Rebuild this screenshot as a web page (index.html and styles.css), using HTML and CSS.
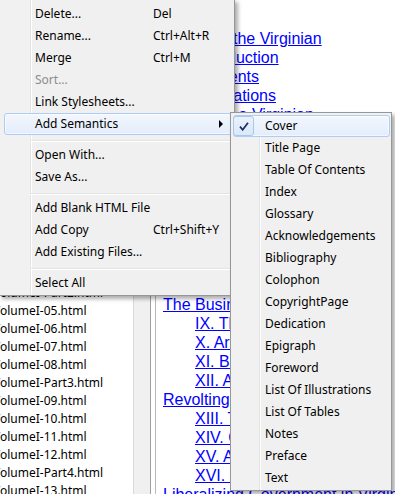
FILE: index.html
```html
<!DOCTYPE html>
<html lang="en">
<head>
    <meta charset="UTF-8">
    <title>Book Browser - Context Menu</title>
    <link rel="stylesheet" href="styles.css">
</head>
<body>
    <div class="workspace">
        <div class="files">
            <ul class="file-list">
                <li>Cover.html</li>
                <li>TitlePage.html</li>
                <li>Contents.html</li>
                <li>Illustrations.html</li>
                <li>Introduction.html</li>
                <li>VolumeI-Part1.html</li>
                <li>VolumeI-01.html</li>
                <li>VolumeI-02.html</li>
                <li>VolumeI-03.html</li>
                <li>VolumeI-04.html</li>
                <li>VolumeI-Part2.html</li>
                <li>VolumeI-05.html</li>
                <li>VolumeI-06.html</li>
                <li>VolumeI-07.html</li>
                <li>VolumeI-08.html</li>
                <li>VolumeI-Part3.html</li>
                <li>VolumeI-09.html</li>
                <li>VolumeI-10.html</li>
                <li>VolumeI-11.html</li>
                <li>VolumeI-12.html</li>
                <li>VolumeI-Part4.html</li>
                <li>VolumeI-13.html</li>
            </ul>
        </div>
        <div class="splitter"></div>
        <div class="preview">
            <div class="preview-frame">
                <ul class="toc">
                    <li><a href="#">Jefferson the Virginian</a></li>
                    <li class="sub"><a href="#">Introduction</a></li>
                    <li class="sub"><a href="#">Contents</a></li>
                    <li class="sub"><a href="#">Illustrations</a></li>
                    <li><a href="#">Scenes of a Virginian</a></li>
                    <li class="sub"><a href="#">I. Family Origins</a></li>
                    <li class="sub"><a href="#">II. Boyhood</a></li>
                    <li class="sub"><a href="#">III. College Days</a></li>
                    <li class="sub"><a href="#">IV. Law Student</a></li>
                    <li><a href="#">The Young Planter</a></li>
                    <li class="sub"><a href="#">V. Monticello</a></li>
                    <li class="sub"><a href="#">VI. Marriage</a></li>
                    <li class="sub"><a href="#">VII. Burgess</a></li>
                    <li class="sub"><a href="#">VIII. Patriot</a></li>
                    <li><a href="#">The Business of Law</a></li>
                    <li class="sub"><a href="#">IX. The Practice</a></li>
                    <li class="sub"><a href="#">X. Around Home</a></li>
                    <li class="sub"><a href="#">XI. Beginnings</a></li>
                    <li class="sub"><a href="#">XII. A Summary</a></li>
                    <li><a href="#">Revolting Colonist</a></li>
                    <li class="sub"><a href="#">XIII. The Congress</a></li>
                    <li class="sub"><a href="#">XIV. Committees</a></li>
                    <li class="sub"><a href="#">XV. A Declaration</a></li>
                    <li class="sub"><a href="#">XVI. Independence</a></li>
                    <li><a href="#">Liberalizing Government in Virginia</a></li>
                </ul>
            </div>
        </div>
    </div>

    <div class="menu main-menu">
        <div class="item"><span>Delete...</span><span class="key">Del</span></div>
        <div class="item"><span>Rename...</span><span class="key">Ctrl+Alt+R</span></div>
        <div class="item"><span>Merge</span><span class="key">Ctrl+M</span></div>
        <div class="item disabled"><span>Sort...</span></div>
        <div class="item"><span>Link Stylesheets...</span></div>
        <div class="item active"><span>Add Semantics</span><span class="arrow"></span></div>
        <div class="separator"></div>
        <div class="item"><span>Open With...</span></div>
        <div class="item"><span>Save As...</span></div>
        <div class="separator"></div>
        <div class="item"><span>Add Blank HTML File</span></div>
        <div class="item"><span>Add Copy</span><span class="key">Ctrl+Shift+Y</span></div>
        <div class="item"><span>Add Existing Files...</span></div>
        <div class="separator"></div>
        <div class="item"><span>Select All</span></div>
    </div>

    <div class="menu sub-menu">
        <div class="item active">
            <span class="check">
                <svg width="10" height="9" viewBox="0 0 10 9"><path d="M1 4.6 L3.7 7.8 L9 0.8" fill="none" stroke="#1b2d66" stroke-width="1.7"/></svg>
            </span>
            <span>Cover</span>
        </div>
        <div class="item"><span class="check"></span><span>Title Page</span></div>
        <div class="item"><span class="check"></span><span>Table Of Contents</span></div>
        <div class="item"><span class="check"></span><span>Index</span></div>
        <div class="item"><span class="check"></span><span>Glossary</span></div>
        <div class="item"><span class="check"></span><span>Acknowledgements</span></div>
        <div class="item"><span class="check"></span><span>Bibliography</span></div>
        <div class="item"><span class="check"></span><span>Colophon</span></div>
        <div class="item"><span class="check"></span><span>CopyrightPage</span></div>
        <div class="item"><span class="check"></span><span>Dedication</span></div>
        <div class="item"><span class="check"></span><span>Epigraph</span></div>
        <div class="item"><span class="check"></span><span>Foreword</span></div>
        <div class="item"><span class="check"></span><span>List Of Illustrations</span></div>
        <div class="item"><span class="check"></span><span>List Of Tables</span></div>
        <div class="item"><span class="check"></span><span>Notes</span></div>
        <div class="item"><span class="check"></span><span>Preface</span></div>
        <div class="item"><span class="check"></span><span>Text</span></div>
    </div>
</body>
</html>
```

FILE: styles.css
```css
body {
    margin: 0;
    width: 395px;
    height: 494px;
    overflow: hidden;
    position: relative;
    background-color: #fff;
    font-family: 'Noto Sans', 'DejaVu Sans', sans-serif;
    font-size: 12px;
    color: #000;
}
ul {
    list-style: none;
    margin: 0;
    padding: 0;
}
.workspace {
    display: flex;
    height: 494px;
}
/* File list pane */
.files {
    width: 133px;
    flex: none;
    overflow: hidden;
    background-color: #fff;
    border-right: 1px solid #d9d9d9;
}
.file-list {
    margin-left: -7px;
    padding-top: 104px;
    white-space: nowrap;
}
.file-list li {
    height: 18px;
    line-height: 17px;
}
.splitter {
    width: 16px;
    flex: none;
    background-color: #f0f0f0;
}
/* Book preview pane */
.preview {
    flex: 1;
    overflow: hidden;
    border-left: 1px solid #a0a0a0;
    padding-left: 4px;
    background-color: #fff;
}
.preview-frame {
    height: 100%;
    border-left: 1px solid #b9b9b9;
    padding-left: 7px;
    overflow: hidden;
}
.toc {
    padding-top: 29px;
    font-family: 'Liberation Sans', Arial, sans-serif;
    font-size: 16px;
    white-space: nowrap;
}
.toc li {
    height: 19px;
    line-height: 19px;
}
.toc li.sub {
    padding-left: 32px;
}
.toc a {
    color: #0000ff;
    text-decoration: underline;
}
/* Context menus */
.menu {
    position: absolute;
    box-sizing: border-box;
    border: 1px solid #979797;
    box-shadow: 3px 3px 4px rgba(0, 0, 0, 0.32);
}
.main-menu {
    left: -1px;
    top: -1px;
    width: 236px;
    padding: 3px 2px 1px 4px;
    background: linear-gradient(to right, #f1f1f1 30px, #e2e3e3 30px, #e2e3e3 31px, #fff 31px, #fff 32px, #f0f0f0 32px);
}
.sub-menu {
    left: 230px;
    top: 112px;
    width: 162px;
    padding: 2px 1px 1px 2px;
    background: linear-gradient(to right, #f1f1f1 28px, #e2e3e3 28px, #e2e3e3 29px, #fff 29px, #fff 30px, #f0f0f0 30px);
}
.item {
    height: 22px;
    line-height: 20px;
    box-sizing: border-box;
    border: 1px solid transparent;
    border-radius: 3px;
    white-space: nowrap;
}
.separator {
    height: 1px;
    background-color: #e2e3e3;
    border-bottom: 1px solid #fff;
    margin: 5px 0 2px 26px;
}
.main-menu .item {
    display: grid;
    grid-template-columns: 118px 1fr auto;
    align-items: center;
    padding: 0 8px 0 30px;
}
.main-menu .key {
    grid-column: 2;
}
.item.active {
    border-color: #aecdf4;
    background: linear-gradient(#f3f7fd, #e3edfb);
    box-shadow: inset 0 0 0 1px rgba(255, 255, 255, 0.55);
}
.item.disabled {
    color: #8d8d8d;
}
.arrow {
    grid-column: 3;
    width: 0;
    height: 0;
    border-left: 4px solid #000;
    border-top: 4px solid transparent;
    border-bottom: 4px solid transparent;
}
.sub-menu .item {
    display: flex;
    align-items: center;
}
.check {
    width: 21px;
    height: 20px;
    flex: none;
    box-sizing: border-box;
    margin-right: 10px;
    display: flex;
    align-items: center;
    justify-content: center;
}
.item.active .check {
    border: 1px solid #a6c8f0;
    border-radius: 3px;
    background: linear-gradient(#eaf2fc, #dbe8f9);
    margin-left: -1px;
    margin-right: 11px;
}
```
